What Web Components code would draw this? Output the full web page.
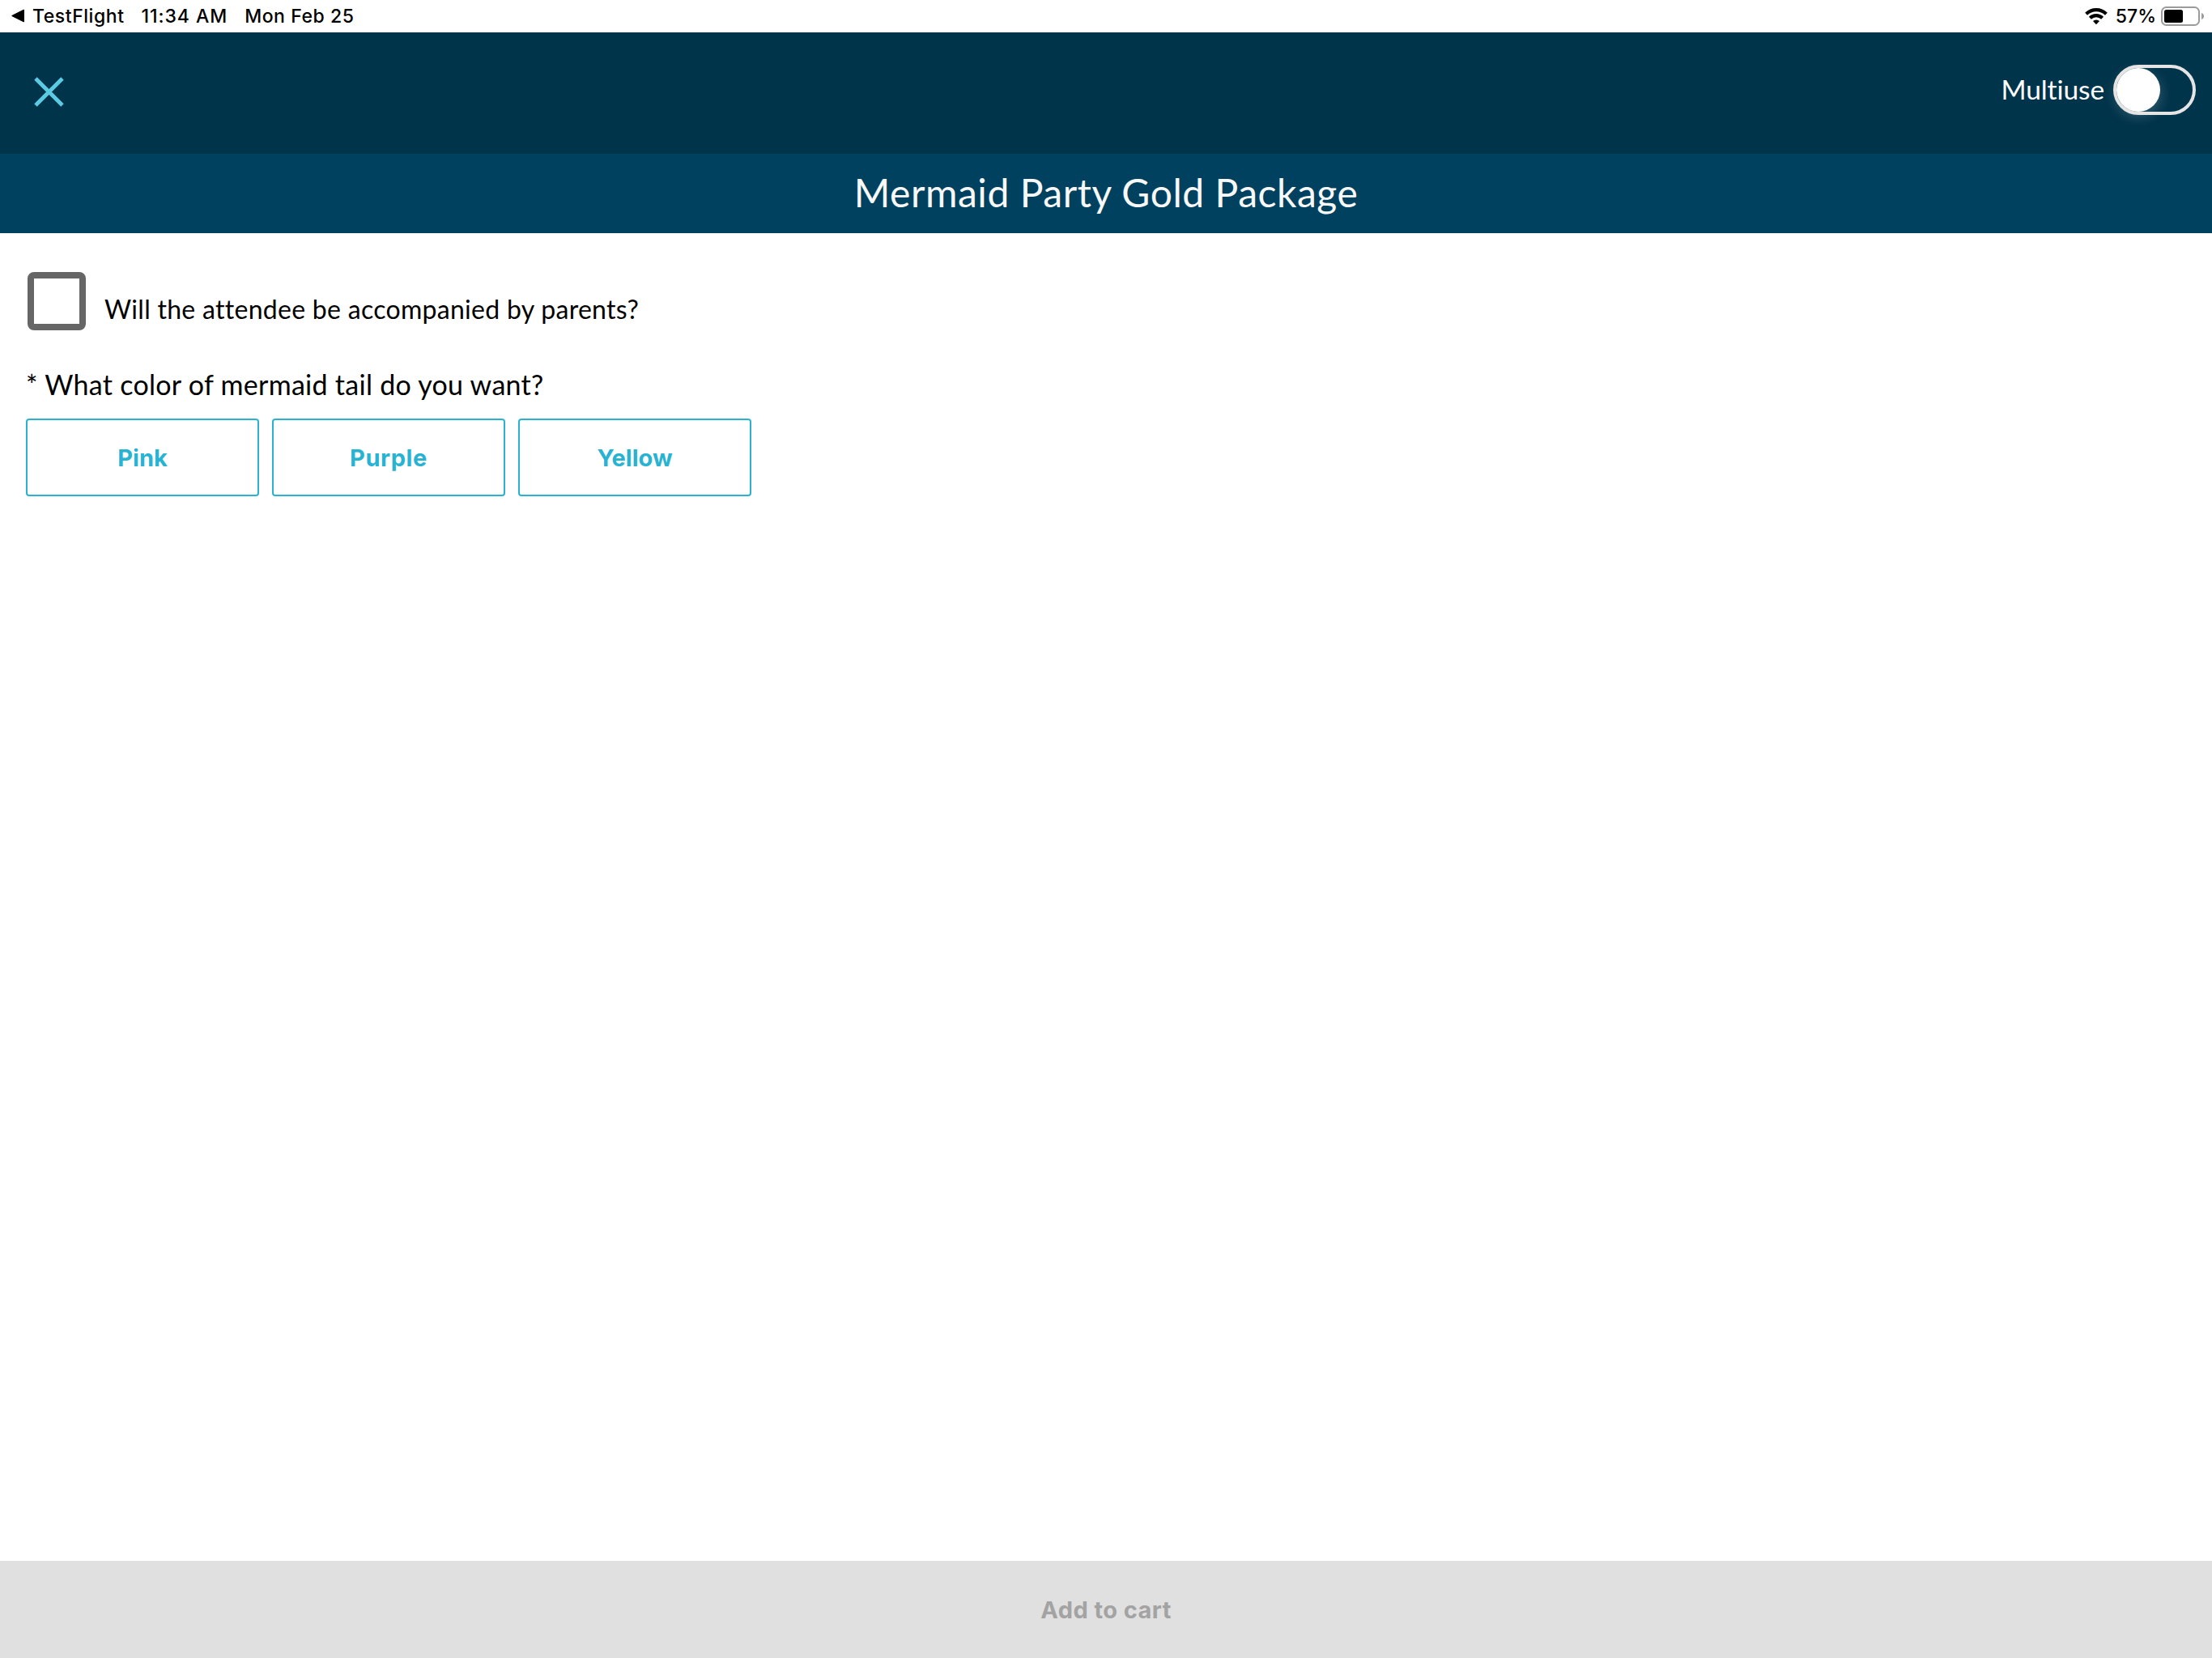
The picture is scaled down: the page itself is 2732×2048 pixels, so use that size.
<!DOCTYPE html>
<html lang="en">
<head>
<meta charset="utf-8">
<title>Add to cart</title>
<style>
html, body {
  margin: 0;
  height: 100%;
  background: white;
}
</style>
</head>
<body>
<order-page>
  <status-bar slot="status" app="TestFlight" time="11:34 AM" date="Mon Feb 25" battery="57"></status-bar>
  <nav-bar slot="nav"><toggle-switch>Multiuse</toggle-switch></nav-bar>
  <page-title slot="title">Mermaid Party Gold Package</page-title>
  <check-question>Will the attendee be accompanied by parents?</check-question>
  <choice-question>
    <span slot="question">* What color of mermaid tail do you want?</span>
    <choice-button>Pink</choice-button>
    <choice-button style="letter-spacing: 0.6px">Purple</choice-button>
    <choice-button>Yellow</choice-button>
  </choice-question>
  <cart-button slot="footer">Add to cart</cart-button>
</order-page>

<script>
function createTemplate(content){
  let template = document.createElement("template")
  template.innerHTML = content
  return template
}

class BaseElement extends HTMLElement {

  constructor(){
    super()
    this.attachShadow({mode: 'open'})
    this.shadowRoot.appendChild(this.constructor.template.content.cloneNode(true))
  }

}

class OrderPage extends BaseElement {
  static template = createTemplate(`
<style>
:host {
  display: flex;
  flex-direction: column;
  height: 100vh;
  color: black;
  font-family: Lato, "Noto Sans", sans-serif;
}
main {
  flex: 1;
  padding: 48px 32px 0;
}
</style>
<slot name="status"></slot>
<slot name="nav"></slot>
<slot name="title"></slot>
<main><slot></slot></main>
<slot name="footer"></slot>`)
}

class StatusBar extends BaseElement {
  static template = createTemplate(`
<style>
:host {
  display: flex;
  justify-content: space-between;
  box-sizing: border-box;
  height: 40px;
  padding: 0 9px 0 14px;
  font: 500 23px/41px Inter, sans-serif;
  letter-spacing: 0.55px;
}
div {
  display: flex;
}
svg {
  display: block;
}
.back {
  margin: 11px 9px 0 0;
}
#time {
  margin-left: 21px;
  letter-spacing: 0.95px;
}
#date {
  margin-left: 21px;
}
.wifi {
  margin: 9px 10px 0 0;
}
#battery {
  letter-spacing: 0;
  margin-right: 6px;
}
.level {
  margin-top: 8px;
}
</style>
<div>
  <svg class="back" width="17" height="17" viewBox="0 0 17 17"><path d="M1 7.7 15 .8q1-.4 1 .6v14.2q0 1-1 .6L1 9.3q-1.4-.8 0-1.6z"/></svg>
  <span id="app"></span>
  <span id="time"></span>
  <span id="date"></span>
</div>
<div>
  <svg class="wifi" width="28" height="22" viewBox="0 0 28 22">
    <g fill="none" stroke="black" stroke-width="4.1">
      <path d="M1.6 8.2a17.6 17.6 0 0 1 24.8 0"/>
      <path d="M6.4 13.3a10.8 10.8 0 0 1 15.2 0"/>
    </g>
    <path d="M14 21.2l-4-4.1a5.8 5.8 0 0 1 8 0z"/>
  </svg>
  <span id="battery"></span>
  <svg class="level" width="54" height="24" viewBox="0 0 54 24">
    <rect x="1" y="1" width="46" height="22" rx="5.5" fill="none" stroke="#9b9b9b" stroke-width="2"/>
    <rect id="charge" x="4" y="4" height="16" rx="2.5"/>
    <path d="M50 8q3 1.2 3 4t-3 4z" fill="#9b9b9b"/>
  </svg>
</div>`)

  connectedCallback(){
    const root = this.shadowRoot
    root.querySelector("#app").textContent = this.getAttribute("app")
    root.querySelector("#time").textContent = this.getAttribute("time")
    root.querySelector("#date").textContent = this.getAttribute("date")
    const battery = Number(this.getAttribute("battery"))
    root.querySelector("#battery").textContent = battery + "%"
    root.querySelector("#charge").setAttribute("width", Math.round(battery * 0.4))
  }
}

class NavBar extends BaseElement {
  static template = createTemplate(`
<style>
:host {
  display: flex;
  align-items: center;
  justify-content: space-between;
  box-sizing: border-box;
  height: 150px;
  padding: 0 20px 8px 40px;
  background: #00344b;
  color: white;
}
button {
  display: block;
  margin-top: 5px;
  padding: 0;
  border: none;
  background: none;
  cursor: pointer;
}
svg {
  display: block;
}
</style>
<button aria-label="Close">
  <svg width="41" height="41" viewBox="0 0 41 41"><path d="M4 4l33 33M37 4L4 37" stroke="#5bcbe3" stroke-width="4.8"/></svg>
</button>
<slot></slot>`)
}

class ToggleSwitch extends BaseElement {
  static template = createTemplate(`
<style>
:host {
  display: flex;
  align-items: center;
  gap: 11px;
  font-size: 33.5px;
  line-height: 40px;
  letter-spacing: -0.1px;
  cursor: pointer;
}
.label {
  margin-top: -3px;
}
.track {
  box-sizing: border-box;
  width: 102px;
  height: 62px;
  border: 4px solid #e5e5e5;
  border-radius: 31px;
}
.knob {
  width: 54px;
  height: 54px;
  border-radius: 50%;
  background: white;
  box-shadow: 0 5px 16px rgba(229, 229, 229, 0.25);
}
:host([on]) .knob {
  margin-left: auto;
}
</style>
<span class="label"><slot></slot></span>
<div class="track"><div class="knob"></div></div>`)

  connectedCallback(){
    this.addEventListener('click', () => this.toggleAttribute('on'))
  }
}

class PageTitle extends BaseElement {
  static template = createTemplate(`
<style>
:host {
  display: block;
  height: 98px;
  background: #00415f;
  color: #f8f8f8;
  font-size: 48px;
  line-height: 95px;
  letter-spacing: 0.54px;
  text-align: center;
}
</style>
<slot></slot>`)
}

class CheckQuestion extends BaseElement {
  static template = createTemplate(`
<style>
:host {
  display: flex;
  gap: 23px;
  margin-left: 2px;
  font-size: 32px;
  line-height: 40px;
  letter-spacing: 0.29px;
}
.box {
  box-sizing: border-box;
  width: 72px;
  height: 72px;
  border: 8px solid #666;
  border-radius: 8px;
}
.label {
  padding-top: 26px;
}
</style>
<div class="box"></div>
<div class="label"><slot></slot></div>`)
}

class ChoiceQuestion extends BaseElement {
  static template = createTemplate(`
<style>
:host {
  display: block;
  margin-top: 46px;
  font-size: 34px;
  line-height: 42px;
  letter-spacing: 0.28px;
}
.choices {
  display: flex;
  gap: 16px;
  margin-top: 21px;
}
</style>
<slot name="question"></slot>
<div class="choices"><slot></slot></div>`)
}

class ChoiceButton extends BaseElement {
  static template = createTemplate(`
<style>
:host {
  display: block;
  box-sizing: border-box;
  width: 288px;
  height: 96px;
  border: 2px solid #28b3d3;
  border-radius: 4px;
  color: #28b3d3;
  font: 700 29px/94px Inter, sans-serif;
  letter-spacing: 0;
  text-align: center;
  cursor: pointer;
}
</style>
<slot></slot>`)
}

class CartButton extends BaseElement {
  static template = createTemplate(`
<style>
:host {
  display: block;
  height: 120px;
  background: #e0e0e0;
  color: #a3a3a3;
  font: 700 29px/122px Inter, sans-serif;
  letter-spacing: 0.45px;
  text-align: center;
}
</style>
<slot></slot>`)
}

window.customElements.define('order-page', OrderPage);
window.customElements.define('status-bar', StatusBar);
window.customElements.define('nav-bar', NavBar);
window.customElements.define('toggle-switch', ToggleSwitch);
window.customElements.define('page-title', PageTitle);
window.customElements.define('check-question', CheckQuestion);
window.customElements.define('choice-question', ChoiceQuestion);
window.customElements.define('choice-button', ChoiceButton);
window.customElements.define('cart-button', CartButton);
</script>
</body>
</html>
